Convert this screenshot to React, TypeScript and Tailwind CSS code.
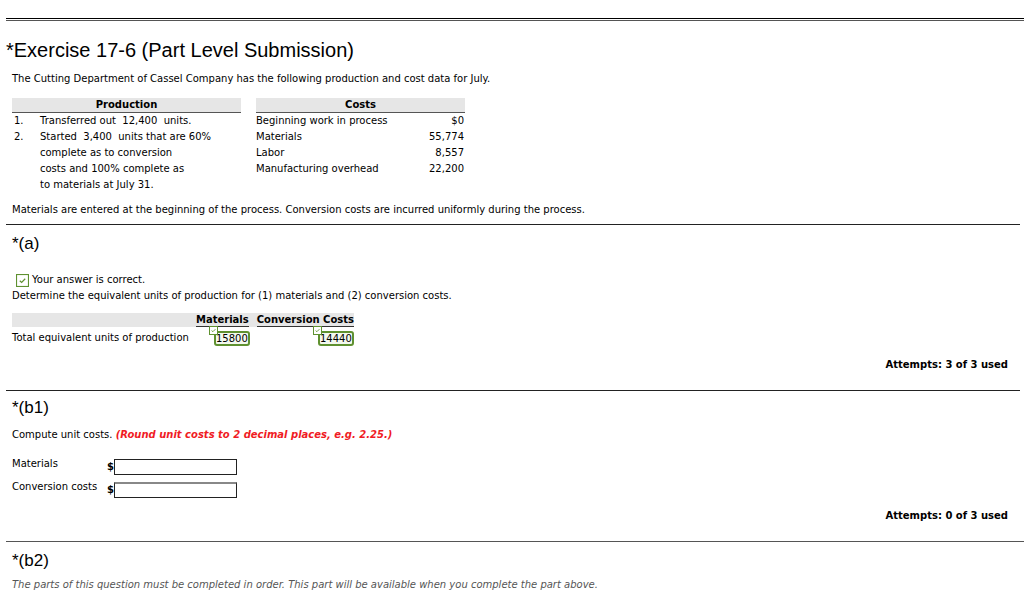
import React from 'react';

const Check = ({ className }: { className?: string }) => (
    <svg className={className} viewBox="0 0 12 12" fill="none">
        <rect x="0.5" y="0.5" width="11" height="11" fill="#fff" stroke="#5f9130" />
        <path d="M3.5 6.2l1.7 1.6 3.3-3.4" stroke="#5f9130" strokeWidth={1.1} />
    </svg>
);

const MiniCheck = () => (
    <svg className="absolute -left-[5px] -top-[5px] w-[9px] h-[9px]" viewBox="0 0 9 9" fill="none">
        <rect x="0.5" y="0.5" width="8" height="8" fill="#fff" stroke="#5f9130" />
        <path d="M2.6 4.6l1.3 1.1 2.5-2.5" stroke="#5f9130" strokeWidth={0.9} />
    </svg>
);

const Rule = ({ className = 'border-[#222]' }: { className?: string }) => (
    <div className={`mr-[4px] border-t ${className}`} />
);

const production = [
    { n: '1.', lines: ['Transferred out\u00a0 12,400\u00a0 units.'] },
    { n: '2.', lines: ['Started\u00a0 3,400\u00a0 units that are 60%', 'complete as to conversion', 'costs and 100% complete as', 'to materials at July 31.'] },
];

const costs = [
    ['Beginning work in process', '$0'],
    ['Materials', '55,774'],
    ['Labor', '8,557'],
    ['Manufacturing overhead', '22,200'],
];

const AnswerBox = ({ value }: { value: string }) => (
    <div className="relative inline-block">
        <MiniCheck />
        <div className="h-[15px] w-[36px] border-2 border-[#5f9130] rounded-[3px] bg-[#f3f8ee] text-[10px] leading-[11px] text-left overflow-hidden">{value}</div>
    </div>
);

export default function App() {
    return (
        <div className="w-[1024px] h-[610px] overflow-hidden bg-white text-black font-['DejaVu_Sans',Verdana,sans-serif] text-[10px] leading-[16px]">
            <div className="pt-[18px] pl-[6px]">
                <div className="h-[3px] border-t border-black border-b border-b-[#555]" />
            </div>

            <h1 className="pl-[6px] mt-[17px] font-['Liberation_Sans',Arial,sans-serif] text-[20px] leading-[24px]">*Exercise 17-6 (Part Level Submission)</h1>

            <div className="px-[12px]">
                <p className="mt-[9px]">The Cutting Department of Cassel Company has the following production and cost data for July.</p>

                <div className="mt-[11px] flex gap-[15px]">
                    <div className="w-[229px]">
                        <div className="bg-[#e6e6e6] border-b border-[#555] text-center font-bold leading-[14px]">Production</div>
                        <div>
                            {production.map(p => (
                                <div key={p.n} className="flex">
                                    <span className="w-[28px] pl-[2px]">{p.n}</span>
                                    <div>
                                        {p.lines.map(l => (
                                            <div key={l}>{l}</div>
                                        ))}
                                    </div>
                                </div>
                            ))}
                        </div>
                    </div>
                    <div className="w-[209px]">
                        <div className="bg-[#e6e6e6] border-b border-[#555] text-center font-bold leading-[14px]">Costs</div>
                        <div>
                            {costs.map(([label, amt]) => (
                                <div key={label} className="flex justify-between pr-[1px]">
                                    <span>{label}</span>
                                    <span>{amt}</span>
                                </div>
                            ))}
                        </div>
                    </div>
                </div>

                <p className="mt-[9px]">Materials are entered at the beginning of the process. Conversion costs are incurred uniformly during the process.</p>
            </div>

            <div className="pl-[6px] mt-[6px]">
                <Rule />
            </div>

            <div className="px-[12px]">
                <h2 className="mt-[9px] font-['Liberation_Sans',Arial,sans-serif] text-[17px] leading-[20px]">*(a)</h2>

                <div className="mt-[18px] flex items-center gap-[3px] pl-[4px]">
                    <Check className="w-[13px] h-[13px]" />
                    <span>Your answer is correct.</span>
                </div>
                <p>Determine the equivalent units of production for (1) materials and (2) conversion costs.</p>

                <div className="mt-[9px] w-[342px] bg-[#e6e6e6] flex justify-end font-bold leading-[13px]">
                    <span className="border-b border-[#333] mr-[8px]">Materials</span>
                    <span className="border-b border-[#333]">Conversion Costs</span>
                </div>
                <div className="w-[342px] flex items-start">
                    <span className="w-[202px] mt-[3px]">Total equivalent units of production</span>
                    <div className="mt-[4px]"><AnswerBox value="15800" /></div>
                    <div className="ml-auto mt-[4px]"><AnswerBox value="14440" /></div>
                </div>

                <div className="mt-[6px] pr-[4px] text-right font-bold">Attempts: 3 of 3 used</div>
            </div>

            <div className="pl-[6px] mt-[17px]">
                <Rule />
            </div>

            <div className="px-[12px]">
                <h2 className="mt-[7px] font-['Liberation_Sans',Arial,sans-serif] text-[17px] leading-[20px]">*(b1)</h2>
                <p className="mt-[9px]">
                    Compute unit costs. <span className="text-[#f01b24] font-bold italic">(Round unit costs to 2 decimal places, e.g. 2.25.)</span>
                </p>

                <div className="mt-[13px] flex items-start">
                    <span className="w-[95px]">Materials</span>
                    <span className="mt-[5px] leading-[12px] font-bold">$</span>
                    <div className="mt-[3px] w-[123px] h-[16px] border border-[#222] bg-white" />
                </div>
                <div className="mt-[4px] flex items-start">
                    <span className="w-[95px]">Conversion costs</span>
                    <span className="mt-[5px] leading-[12px] font-bold">$</span>
                    <div className="mt-[3px] w-[123px] h-[16px] border border-[#222] border-t-[#888] border-t-2 bg-white" />
                </div>

                <div className="mt-[10px] pr-[4px] text-right font-bold">Attempts: 0 of 3 used</div>
            </div>

            <div className="pl-[6px] mt-[17px]">
                <div className="border-t border-[#555]" />
            </div>

            <div className="px-[12px]">
                <h2 className="mt-[9px] font-['Liberation_Sans',Arial,sans-serif] text-[17px] leading-[20px]">*(b2)</h2>
                <p className="mt-[6px] italic text-[#555]">The parts of this question must be completed in order. This part will be available when you complete the part above.</p>
            </div>
        </div>
    );
}
